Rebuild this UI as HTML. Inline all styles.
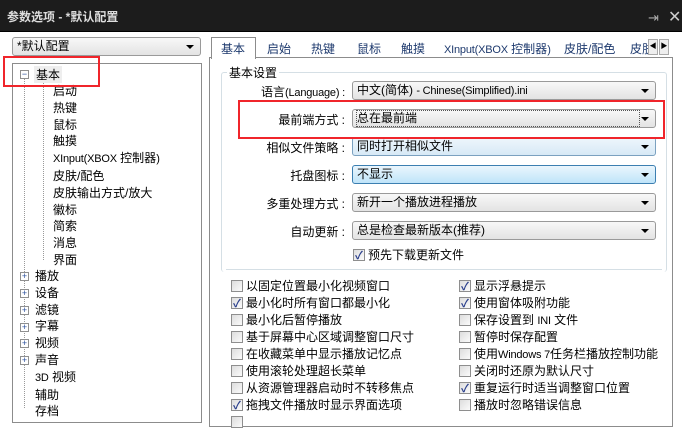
<!DOCTYPE html>
<html><head><meta charset="utf-8"><style>
*{margin:0;padding:0;box-sizing:border-box}
body{width:682px;height:420px;overflow:hidden;background:#fff;font-family:"Liberation Sans","Noto Sans CJK SC",sans-serif;font-size:12px;color:#000;position:relative}
.a{position:absolute;white-space:nowrap}
.l{font-size:11px;letter-spacing:-0.2px}
.title{left:0;top:0;width:682px;height:32px;background:#1c1c1c;border-bottom:1px solid #000}
.tt{left:7px;top:8px;color:#ddd;font-size:12px;font-weight:bold}
.combo{border:1px solid #9a9a9a;border-radius:3px;background:linear-gradient(#f8f8f8,#e3e3e3);height:19px;padding:1px 4px;line-height:15px}
.arr{position:absolute;right:6px;top:7px;width:0;height:0;border-left:4px solid transparent;border-right:4px solid transparent;border-top:4px solid #000}
.tree{left:12px;top:63px;width:190px;height:360px;border:1px solid #8c8c8c}
.tab{top:40px;color:#1e3a6e;font-size:12px}
.lbl{text-align:right;width:130px;left:215px}
.cb{width:12px;height:12px;border:1px solid #8e8e8e;background:linear-gradient(135deg,#ddd,#fbfbfb)}
.ck::after{content:"✓";position:absolute;left:1px;top:-3px;font-size:11px;color:#2a3f8c;font-weight:bold}
.red{border:2px solid #f0252b}
.plus{width:9px;height:9px;border:1px solid #8f8f8f;background:#fff;font-size:9px;line-height:7px;text-align:center;color:#2a4f9c}
.dot{border-left:1px dotted #999}
</style></head><body>
<div class="a title"></div>
<div class="a tt">参数选项 - *默认配置</div>
<div class="a" style="left:648px;top:10px;color:#aaa;font-size:13px">⇥</div>
<div class="a" style="left:668px;top:7px;color:#ccc;font-size:16px">✕</div>

<div class="a combo" style="left:12px;top:37px;width:189px">*默认配置<span class="arr"></span></div>
<div class="a tree"></div>
<div class="a dot" style="left:24px;top:78px;height:330px"></div>
<div class="a dot" style="left:43px;top:82px;height:178px"></div>
<div class="a plus" style="left:20px;top:70px">−</div>
<div class="a" style="left:34px;top:66px;background:#eee;padding:0 2px">基本</div>
<div class="a" style="left:53px;top:83px;line-height:16.8px">启动<br>热键<br>鼠标<br>触摸<br><span class="l">XInput(XBOX</span> 控制器<span class="l">)</span><br>皮肤/配色<br>皮肤输出方式/放大<br>徽标<br>简索<br>消息<br>界面</div>
<div class="a" style="left:35px;top:268px;line-height:16.8px">播放<br>设备<br>滤镜<br>字幕<br>视频<br>声音<br><span class="l">3D</span> 视频<br>辅助<br>存档</div>
<div class="a plus" style="left:20px;top:272px">+</div><div class="a plus" style="left:20px;top:289px">+</div><div class="a plus" style="left:20px;top:306px">+</div><div class="a plus" style="left:20px;top:323px">+</div><div class="a plus" style="left:20px;top:339px">+</div><div class="a plus" style="left:20px;top:356px">+</div>
<div class="a red" style="left:3px;top:56px;width:97px;height:31px"></div>

<div class="a" style="left:209px;top:57px;width:464px;height:370px;border:1px solid #8c8c8c;background:#fff"></div>
<div class="a" style="left:211px;top:37px;width:45px;height:22px;border:1px solid #8c8c8c;border-bottom:none;background:#fff"></div>
<div class="a tab" style="left:221px">基本</div>
<div class="a tab" style="left:267px">启始</div>
<div class="a tab" style="left:311px">热键</div>
<div class="a tab" style="left:357px">鼠标</div>
<div class="a tab" style="left:401px">触摸</div>
<div class="a tab" style="left:444px"><span class="l">XInput(XBOX</span> 控制器<span class="l">)</span></div>
<div class="a tab" style="left:564px">皮肤/配色</div>
<div class="a tab" style="left:630px;width:18px;overflow:hidden">皮肤</div>
<div class="a" style="left:648px;top:39px;width:10px;height:16px;border:1px solid #aaa;background:#eee;font-size:7px;line-height:14px;text-align:center">◀</div>
<div class="a" style="left:659px;top:39px;width:10px;height:16px;border:1px solid #aaa;background:#eee;font-size:7px;line-height:14px;text-align:center">▶</div>

<div class="a" style="left:221px;top:72px;width:446px;height:200px;border:1px solid #d5dfe5;border-radius:3px;border-bottom:none"></div>
<div class="a" style="left:227px;top:64px;background:#fff;padding:0 2px">基本设置</div>

<div class="a lbl" style="top:83px">语言<span class="l">(Language) :</span></div>
<div class="a lbl" style="top:111px">最前端方式 :</div>
<div class="a lbl" style="top:139px">相似文件策略 :</div>
<div class="a lbl" style="top:167px">托盘图标 :</div>
<div class="a lbl" style="top:195px">多重处理方式 :</div>
<div class="a lbl" style="top:223px">自动更新 :</div>
<div class="a combo" style="left:352px;top:81px;width:304px">中文(简体) <span class="l">- Chinese(Simplified).ini</span><span class="arr"></span></div>
<div class="a combo" style="left:352px;top:109px;width:304px"><span style="display:inline-block;outline:1px dotted #555;width:282px">总在最前端</span><span class="arr"></span></div>
<div class="a combo" style="left:352px;top:137px;width:304px;background:linear-gradient(#eef6fc,#d7e9f6);border-color:#7ba1c0">同时打开相似文件<span class="arr"></span></div>
<div class="a combo" style="left:352px;top:165px;width:304px;background:linear-gradient(#eaf6fd,#bfe4f9);border-color:#3c7fb1">不显示<span class="arr"></span></div>
<div class="a combo" style="left:352px;top:193px;width:304px">新开一个播放进程播放<span class="arr"></span></div>
<div class="a combo" style="left:352px;top:221px;width:304px">总是检查最新版本(推荐)<span class="arr"></span></div>
<div class="a cb ck" style="left:353px;top:249px"></div>
<div class="a" style="left:368px;top:246px">预先下载更新文件</div>
<div class="a red" style="left:238px;top:100px;width:427px;height:39px"></div>
<div class="a" style="left:226px;top:269px;width:436px;border-top:1px solid #d5dfe5"></div>

<div class="a cb" style="left:231px;top:280px"></div><div class="a" style="left:246px;top:277px">以固定位置最小化视频窗口</div>
<div class="a cb ck" style="left:231px;top:297px"></div><div class="a" style="left:246px;top:294px">最小化时所有窗口都最小化</div>
<div class="a cb" style="left:231px;top:314px"></div><div class="a" style="left:246px;top:311px">最小化后暂停播放</div>
<div class="a cb" style="left:231px;top:331px"></div><div class="a" style="left:246px;top:328px">基于屏幕中心区域调整窗口尺寸</div>
<div class="a cb" style="left:231px;top:348px"></div><div class="a" style="left:246px;top:345px">在收藏菜单中显示播放记忆点</div>
<div class="a cb" style="left:231px;top:365px"></div><div class="a" style="left:246px;top:362px">使用滚轮处理超长菜单</div>
<div class="a cb" style="left:231px;top:382px"></div><div class="a" style="left:246px;top:379px">从资源管理器启动时不转移焦点</div>
<div class="a cb ck" style="left:231px;top:399px"></div><div class="a" style="left:246px;top:396px">拖拽文件播放时显示界面选项</div>
<div class="a cb" style="left:231px;top:416px"></div>

<div class="a cb ck" style="left:459px;top:280px"></div><div class="a" style="left:474px;top:277px">显示浮悬提示</div>
<div class="a cb ck" style="left:459px;top:297px"></div><div class="a" style="left:474px;top:294px">使用窗体吸附功能</div>
<div class="a cb" style="left:459px;top:314px"></div><div class="a" style="left:474px;top:311px">保存设置到 <span class="l">INI</span> 文件</div>
<div class="a cb" style="left:459px;top:331px"></div><div class="a" style="left:474px;top:328px">暂停时保存配置</div>
<div class="a cb" style="left:459px;top:348px"></div><div class="a" style="left:474px;top:345px">使用<span class="l">Windows 7</span>任务栏播放控制功能</div>
<div class="a cb" style="left:459px;top:365px"></div><div class="a" style="left:474px;top:362px">关闭时还原为默认尺寸</div>
<div class="a cb ck" style="left:459px;top:382px"></div><div class="a" style="left:474px;top:379px">重复运行时适当调整窗口位置</div>
<div class="a cb" style="left:459px;top:399px"></div><div class="a" style="left:474px;top:396px">播放时忽略错误信息</div>
</body></html>
